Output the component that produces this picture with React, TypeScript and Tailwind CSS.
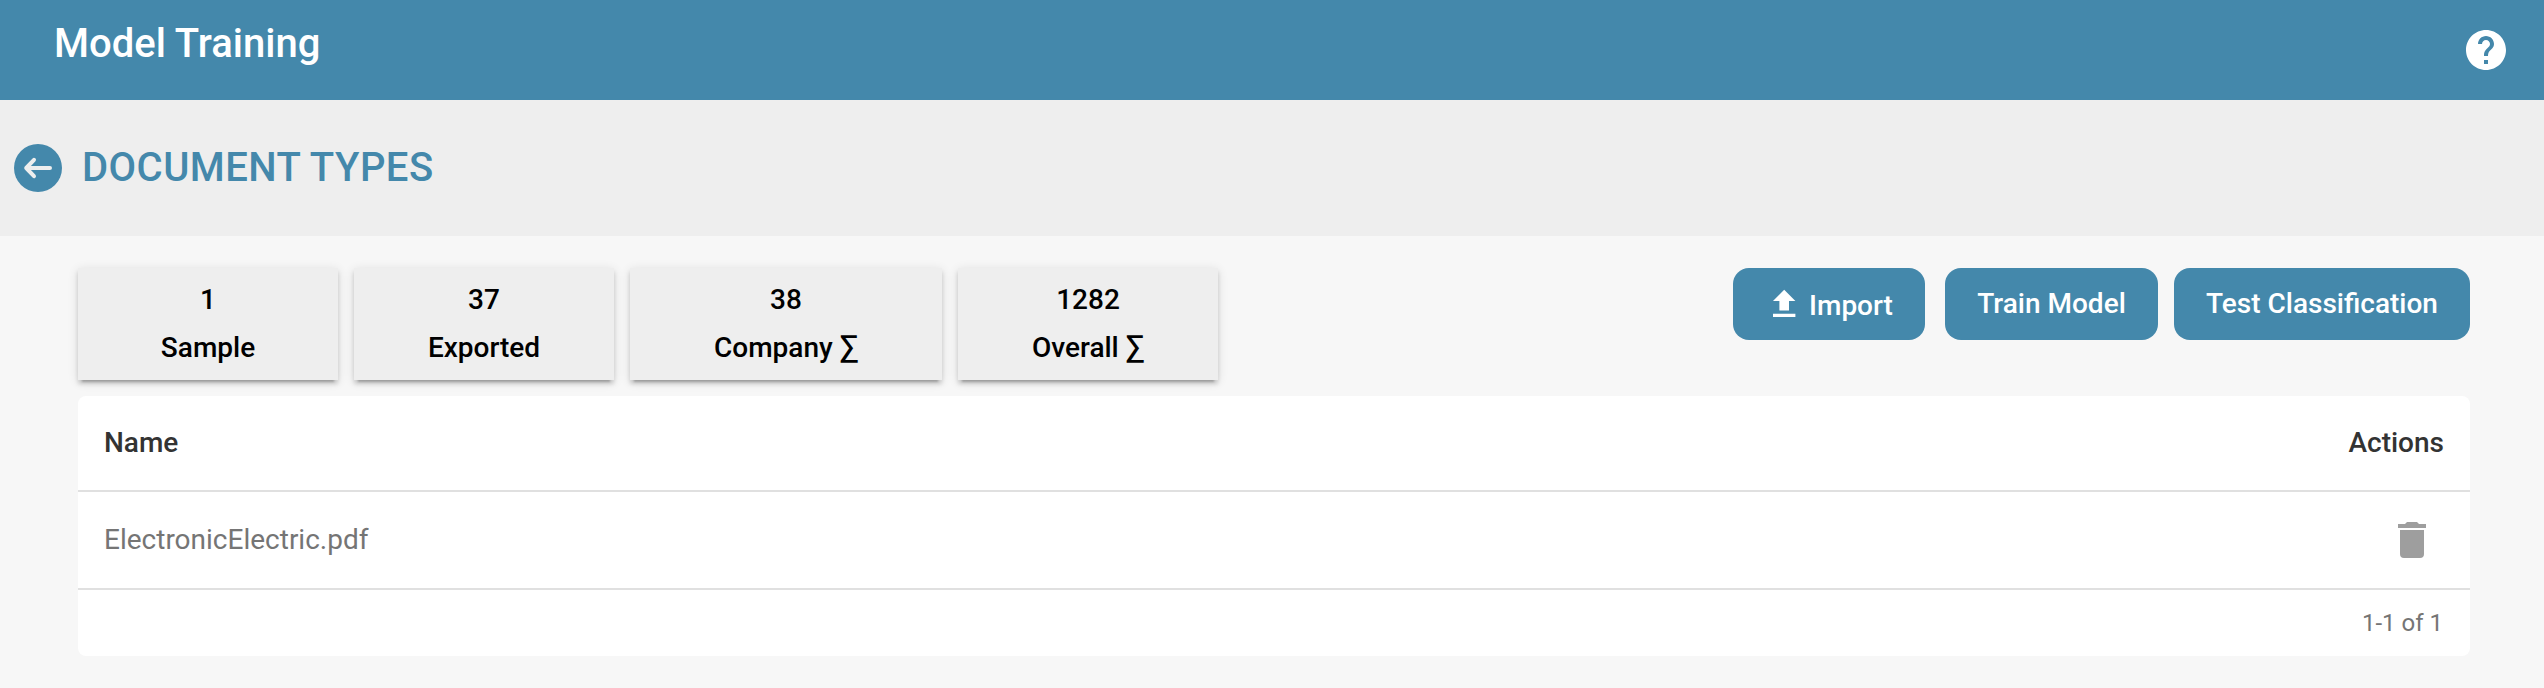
import type { ReactNode } from "react";

const stats = [
  { value: "1", label: "Sample", width: "w-[260px]" },
  { value: "37", label: "Exported", width: "w-[260px]" },
  { value: "38", label: "Company", sum: true, width: "w-[312px]" },
  { value: "1282", label: "Overall", sum: true, width: "w-[260px]" },
];

const files = ["ElectronicElectric.pdf"];

function HelpIcon() {
  return (
    <svg viewBox="0 0 24 24" className="size-12 fill-white">
      <path d="M12 2C6.48 2 2 6.48 2 12s4.48 10 10 10 10-4.48 10-10S17.52 2 12 2zm1 17h-2v-2h2v2zm2.07-7.75l-.9.92C13.45 12.9 13 13.5 13 15h-2v-.5c0-1.1.45-2.1 1.17-2.83l1.24-1.26c.37-.36.59-.86.59-1.41 0-1.1-.9-2-2-2s-2 .9-2 2H8c0-2.21 1.79-4 4-4s4 1.79 4 4c0 .88-.36 1.68-.93 2.25z" />
    </svg>
  );
}

function BackIcon() {
  return (
    <svg
      viewBox="0 0 48 48"
      className="size-12 fill-none stroke-[#eee] stroke-4 [stroke-linecap:round] [stroke-linejoin:round]"
    >
      <circle cx="24" cy="24" r="24" className="fill-[#4488ab] stroke-none" />
      <path d="M36 24H12.2M20 15.8L12.2 24l7.8 8.2" />
    </svg>
  );
}

function UploadIcon() {
  return (
    <svg viewBox="0 0 24 24" className="-mt-1 h-[38.4px] w-[38.4px] fill-white">
      <path d="M9 16V10H5L12 3L19 10H15V16H9M5 20V18H19V20H5Z" />
    </svg>
  );
}

function TrashIcon() {
  return (
    <svg viewBox="0 0 24 24" className="size-12 fill-[#9e9e9e]">
      <path d="M19 4H15.5L14.5 3H9.5L8.5 4H5V6H19M6 19A2 2 0 0 0 8 21H16A2 2 0 0 0 18 19V7H6V19Z" />
    </svg>
  );
}

function ActionButton({ children, className }: { children: ReactNode; className: string }) {
  return (
    <button
      type="button"
      className={`flex h-[72px] justify-center rounded-2xl bg-[#4488ab] text-[28px] leading-[33px] font-medium whitespace-nowrap text-white ${className}`}
    >
      {children}
    </button>
  );
}

export default function App() {
  return (
    <div className="flex h-[688px] w-full flex-col bg-[#f7f7f7] font-['Roboto',sans-serif]">
      <header className="flex h-[100px] shrink-0 justify-between bg-[#4488ab] pr-[34px] pl-[54px]">
        <h1 className="pt-5 text-[40px] leading-[47px] font-medium text-white">Model Training</h1>
        <button type="button" aria-label="Help" className="self-center">
          <HelpIcon />
        </button>
      </header>

      <div className="flex h-[136px] shrink-0 items-start gap-5 bg-[#eee] pt-11 pl-3.5">
        <button type="button" aria-label="Back">
          <BackIcon />
        </button>
        <h2 className="text-[40px] leading-[47px] font-medium tracking-[0.45px] text-[#4488ab]">DOCUMENT TYPES</h2>
      </div>

      <main className="flex flex-col gap-4 pt-8 pr-[74px] pl-[78px]">
        <div className="flex items-start justify-between">
          <div className="flex gap-4">
            {stats.map((s) => (
              <div
                key={s.label}
                className={`flex h-28 flex-col items-center gap-[15px] bg-[#eee] pt-[15px] text-[28px] leading-[33px] font-medium text-black shadow-[0_6px_2px_-4px_rgba(0,0,0,0.2),0_4px_4px_0_rgba(0,0,0,0.14),0_2px_10px_0_rgba(0,0,0,0.12)] ${s.width}`}
              >
                <div className="h-[33px]">{s.value}</div>
                <div className="h-[33px] whitespace-nowrap">
                  {s.label}
                  {s.sum && (
                    <>
                      {" "}
                      <span className="align-[1px] font-['Open_Sans'] text-[29px] leading-5 font-semibold">∑</span>
                    </>
                  )}
                </div>
              </div>
            ))}
          </div>
          <div className="flex">
            <ActionButton className="mr-5 w-48 gap-[5.6px] pt-[21px]">
              <UploadIcon />
              Import
            </ActionButton>
            <ActionButton className="mr-4 w-[213px] pt-[19px]">Train Model</ActionButton>
            <ActionButton className="w-[296px] pt-[19px]">Test Classification</ActionButton>
          </div>
        </div>

        <section className="flex flex-col rounded-lg bg-white text-[28px] leading-[33px]">
          <div className="flex h-24 justify-between border-b-2 border-[#e0e0e0] px-[26px] pt-[30px] font-medium text-[#333]">
            <span>Name</span>
            <span>Actions</span>
          </div>
          {files.map((name) => (
            <div
              key={name}
              className="flex h-[98px] items-center justify-between border-b-2 border-[#e0e0e0] pr-[34px] pl-[26px] text-[#757575]"
            >
              <span className="-mt-px">{name}</span>
              <button type="button" aria-label="Delete">
                <TrashIcon />
              </button>
            </div>
          ))}
          <div className="flex h-[66px] justify-end px-[27px] pt-[19px] text-2xl leading-7 text-[#757575]">
            1-1 of 1
          </div>
        </section>
      </main>
    </div>
  );
}
